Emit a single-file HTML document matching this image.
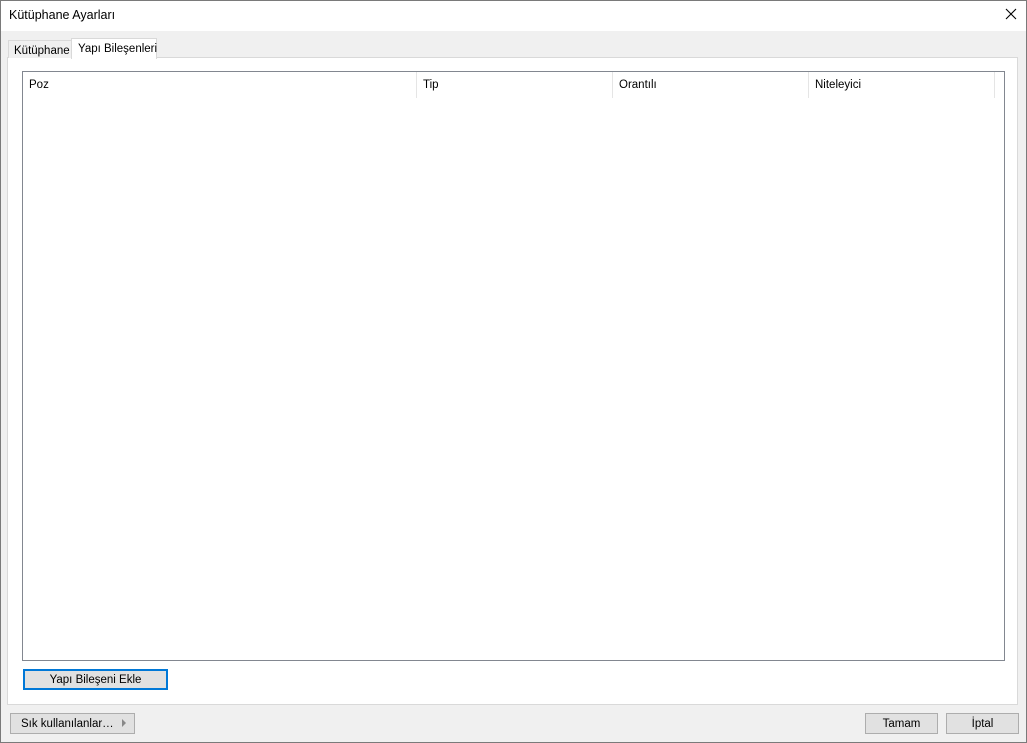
<!DOCTYPE html><html><head><style>
body{margin:0;width:1027px;height:743px;position:relative;overflow:hidden;font-family:"Liberation Sans",sans-serif;font-size:12px;background:#f0f0f0;color:#000}
div{position:absolute;box-sizing:border-box;white-space:nowrap}
.btn{background:#e1e1e1;border:1px solid #adadad;text-align:center;line-height:20px}
.h{top:7px;font-size:11.5px;color:#000}
.d{top:0;width:1px;height:26px;background:#e5e5e5}
</style></head><body>
<div style="left:0;top:0;width:1027px;height:743px;border:1px solid #7a7a7a"></div>
<div style="left:1px;top:1px;width:1025px;height:30px;background:#fff"></div>
<div style="left:9px;top:8px;font-size:12.5px">Kütüphane Ayarları</div>
<svg style="position:absolute;left:1005px;top:8px" width="12" height="12"><path d="M1 1L11 11M11 1L1 11" stroke="#000" stroke-width="1.1"/></svg>
<div style="left:7px;top:57px;width:1011px;height:648px;background:#fff;border:1px solid #d9d9d9"></div>
<div style="left:8px;top:40px;width:64px;height:18px;background:#f0f0f0;border:1px solid #d9d9d9;border-bottom:none;padding:4px 0 0 5px;font-size:11.5px">Kütüphane</div>
<div style="left:71px;top:38px;width:86px;height:21px;background:#fff;border:1px solid #d9d9d9;border-bottom:none;padding:4px 0 0 6px;font-size:11.5px">Yapı Bileşenleri</div>
<div style="left:22px;top:71px;width:983px;height:590px;border:1px solid #828790;background:#fff">
<div class="h" style="left:6px">Poz</div><div class="d" style="left:393px"></div>
<div class="h" style="left:400px">Tip</div><div class="d" style="left:589px"></div>
<div class="h" style="left:596px">Orantılı</div><div class="d" style="left:785px"></div>
<div class="h" style="left:792px">Niteleyici</div><div class="d" style="left:971px"></div>
</div>
<div class="btn" style="left:23px;top:669px;width:145px;height:21px;border:2px solid #0078d7;line-height:19px;font-size:11.5px">Yapı Bileşeni Ekle</div>
<div class="btn" style="left:10px;top:713px;width:125px;height:21px;text-align:left;padding-left:10px;font-size:11.5px">Sık kullanılanlar…</div>
<svg style="position:absolute;left:122px;top:719px" width="5" height="8"><path d="M0 0L4 4L0 8Z" fill="#888"/></svg>
<div class="btn" style="left:865px;top:713px;width:73px;height:21px;font-size:11.5px">Tamam</div>
<div class="btn" style="left:946px;top:713px;width:73px;height:21px;font-size:11.5px">İptal</div>
</body></html>
